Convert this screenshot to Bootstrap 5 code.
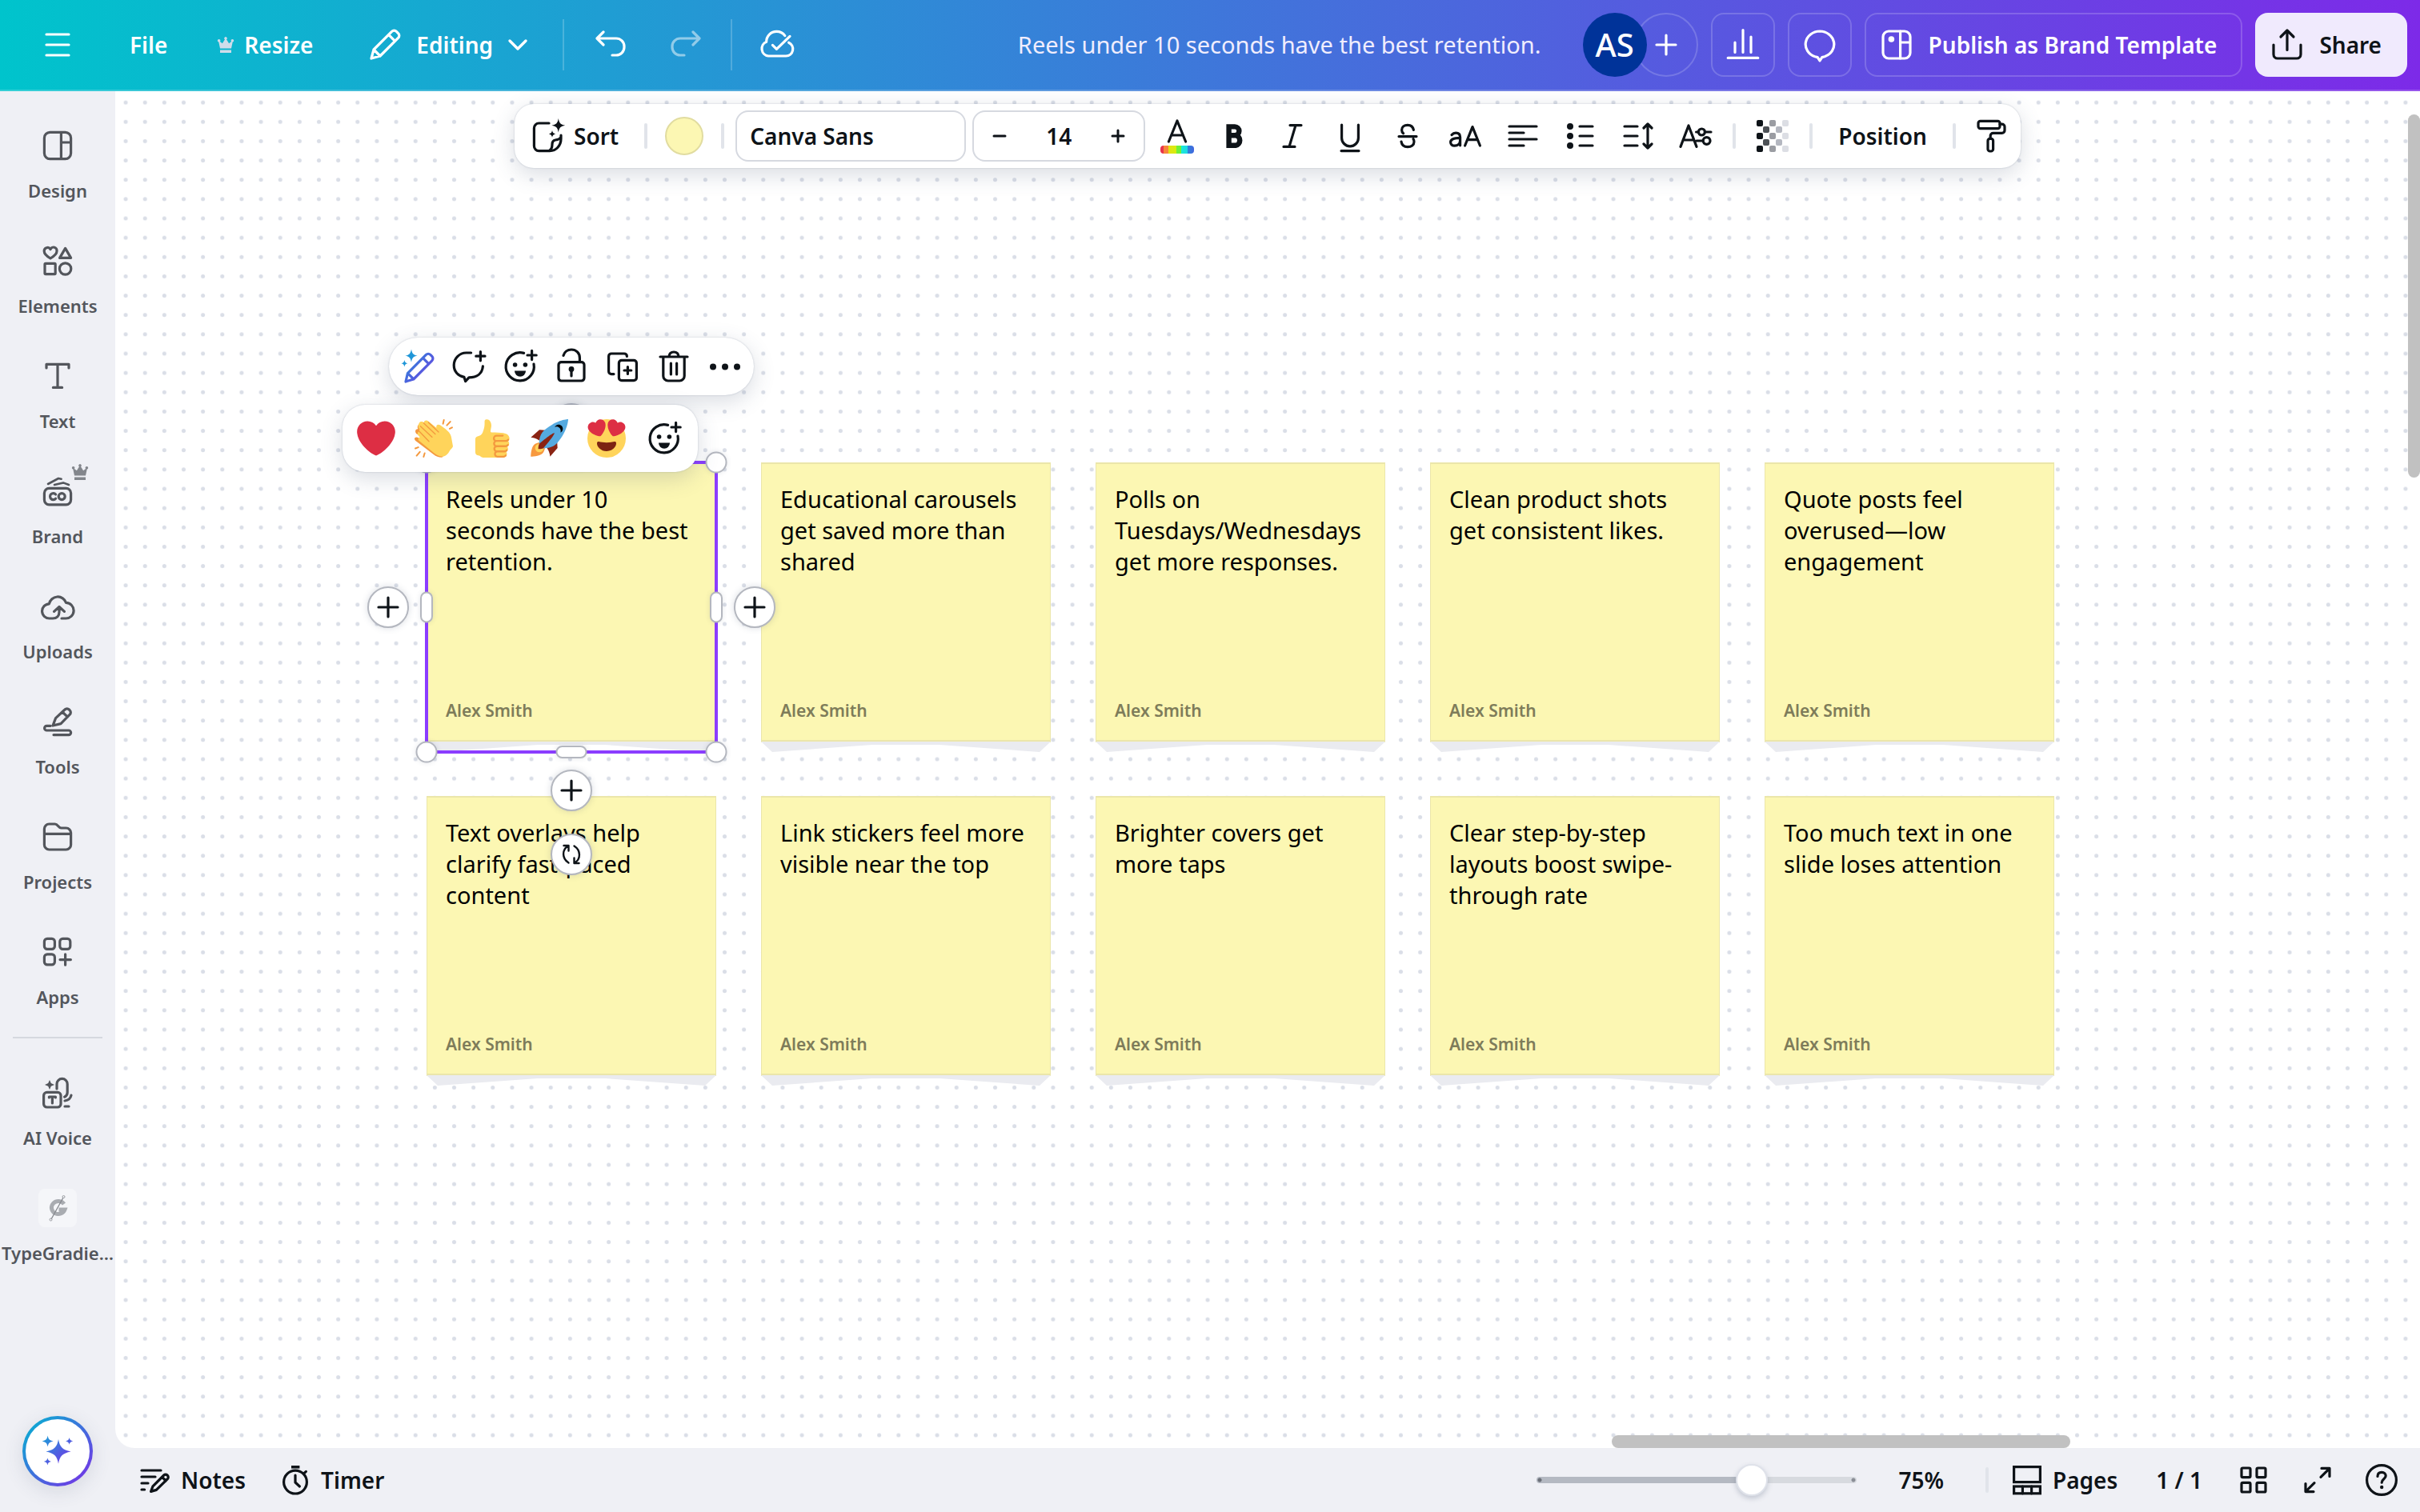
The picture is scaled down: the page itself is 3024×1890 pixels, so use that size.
<!DOCTYPE html>
<html lang="en">
<head>
<meta charset="utf-8">
<meta name="viewport" content="width=device-width, initial-scale=1">
<title>Reels under 10 seconds have the best retention.</title>
<link rel="stylesheet" href="https://cdn.jsdelivr.net/npm/bootstrap@5.3.0/dist/css/bootstrap.min.css">
<style>
  :root { --ink: #0e1318; --chrome: #eff0f5; --muted: #53565c; --rule: #d9dce3; }
  html, body { height: 100%; }
  body { font-family: "Noto Sans", sans-serif; font-size: 28px; line-height: 40px; color: var(--ink); background: var(--chrome); overflow: hidden; }
  button, input, select { font: inherit; color: inherit; }
  button { background: none; border: 0; padding: 0; }
  svg { display: block; flex: none; }
  .ico { width: 48px; height: 48px; fill: none; stroke: currentColor; stroke-width: 1.6; stroke-linecap: round; stroke-linejoin: round; }
  .ico-bold { stroke-width: 3.2; stroke-linejoin: miter; }
  .ico-pen { stroke: url(#penGrad); }
  .ico-square { stroke-linejoin: miter; }
  .solid { fill: currentColor; stroke: none; }
  .fill-min { min-width: 0; min-height: 0; }

  /* header */
  .topbar { height: 114px; padding: 0 16px 2px 48px; color: #fff; background: linear-gradient(90deg, #00c4cc, #7d2ae8); box-shadow: inset 0 -2px rgba(255,255,255,.2); font-weight: 600; }
  .topbar .vr-line { width: 2px; height: 64px; background: rgba(255,255,255,.2); }
  .topbar .ghost { height: 80px; min-width: 80px; border: 2px solid rgba(255,255,255,.18); border-radius: 16px; }
  .file-btn { margin-left: 66px; }
  .resize-btn { margin-left: 62px; gap: 12px; }
  .edit-btn { margin: 0 40px 0 66px; gap: 15px; }
  .undo-btn { margin-left: 34px; }
  .redo-btn { margin: 0 32px 0 46px; }
  .save-btn { margin-left: 32px; }
  .doc-title { width: 660px; margin-right: 52px; padding: 0; border: 0; background: none; color: #f0edfd; font-size: 29px; font-weight: 400; text-align: end; }
  .avatar { width: 80px; height: 80px; border-radius: 50%; background: #003399; font-size: 40px; font-weight: 500; z-index: 1; }
  .invite { width: 80px; height: 80px; border: 2px solid rgba(255,255,255,.18); border-radius: 50%; margin-left: -16px; margin-right: 16px; }
  .publish { padding: 0 30px 0 14px; gap: 16px; }
  .share { height: 80px; padding: 0 32px 0 16px; gap: 16px; border-radius: 16px; background: #f0eafd; color: var(--ink); }

  /* side rail */
  .rail { width: 144px; color: var(--muted); font-size: 22px; line-height: 32px; font-weight: 600; }
  .rail-item { width: 144px; height: 144px; padding-top: 44px; gap: 16px; color: inherit; text-decoration: none; white-space: nowrap; }
  .rail-rule { width: 112px; height: 2px; margin-top: 30px; background: #d5d8df; }
  .crown-badge { position: absolute; top: 34px; left: 89px; color: #83868c; }
  .app-tile { width: 48px; height: 48px; border-radius: 8px; background: #f5f6f9; }
  .magic { width: 88px; height: 88px; margin: auto 0 32px; border: 4px solid transparent; border-radius: 50%; background: linear-gradient(#fff,#fff) padding-box, linear-gradient(135deg,#00b8d0,#7d2ae8) border-box; box-shadow: 0 6px 24px rgba(64,79,109,.14); }

  /* canvas */
  .stage { border-bottom-left-radius: 24px; background-color: #fff; overflow: hidden;
    background-image: url("data:image/svg+xml,%3Csvg xmlns='http://www.w3.org/2000/svg' viewBox='0 0 7 7'%3E%3Cdefs%3E%3Cpattern id='d' width='1' height='1' patternUnits='userSpaceOnUse'%3E%3Ccircle cx='.5' cy='.5' r='.105' fill='%23dadee7'/%3E%3C/pattern%3E%3C/defs%3E%3Crect width='7' height='7' fill='url(%23d)'/%3E%3C/svg%3E");
    background-size: 169px 169px; background-position: 1px 2px; }
  .board { padding: 464px 0 0 389px; }
  .sticky-grid { display: grid; grid-template-columns: repeat(5, 362px); gap: 55px 56px; }
  .sticky { position: relative; height: 362px; }
  .sticky-shade { position: absolute; left: 0; bottom: 0; width: 362px; height: 13px; }
  .sticky-face { height: 350px; padding: 24px 23px 19px; background: #fcf7b3; border: 2px solid #ebe6aa; border-width: 2px 1px 3px; color: #000; font-size: 29px; line-height: 39px; }
  .sticky-author { font-size: 21px; line-height: 36px; font-weight: 600; color: #7e7c5a; }

  /* selection */
  .sel-frame { position: absolute; inset: -2px; border: 4px solid #8b3dff; }
  .grip, .add-btn { position: absolute; transform: translate(-50%,-50%); background: #fff; border: 2px solid #b4b7bf; box-shadow: 0 0 6px rgba(64,79,109,.14); }
  .grip { width: 27px; height: 27px; border-radius: 50%; }
  .grip.tall { width: 16px; height: 39px; border-radius: 8px; }
  .grip.wide { width: 39px; height: 16px; border-radius: 8px; }
  .add-btn { width: 52px; height: 52px; border-radius: 50%; display: grid; place-items: center; box-shadow: 0 0 8px rgba(64,79,109,.2); }
  .l { left: 0; } .c { left: 50%; } .r { left: 100%; }
  .t { top: 0; } .m { top: 50%; } .b { top: 100%; }
  .out-l { left: -48px; } .out-r { left: 410px; } .out-t { top: -48px; } .out-b { top: 410px; } .spin { top: 490px; }

  /* floating bars */
  .float-bar { position: absolute; background: #fff; box-shadow: 0 0 2px rgba(64,79,109,.3), 0 8px 28px rgba(64,79,109,.2); }
  .actions { top: -156px; left: -47px; height: 72px; padding: 0 4px; border-radius: 36px; }
  .actions button { width: 64px; height: 72px; }
  .reactions { top: -72px; left: -105px; height: 84px; padding: 0 6px; border-radius: 28px; }
  .reactions button { width: 72px; height: 84px; }
  .format { top: 16px; left: 50%; transform: translateX(-50%); height: 80px; width: 1882px; border-radius: 24px; font-weight: 600; padding-left: 18px; }
  .format > * { flex: none; }
  .format .tool { width: 72px; height: 72px; }
  .bar-rule { width: 4px; height: 32px; border-radius: 2px; background: #e1e4ea; flex: none; }
  .rule-gap { margin: 0 10px; }
  .sort-btn { gap: 8px; margin-right: 32px; }
  .swatch { width: 48px; height: 48px; border-radius: 50%; background: #fcf7b3; border: 2px solid #e1dca0; margin: 0 22px; }
  .field { height: 64px; border: 2px solid #d6d9e0; border-radius: 16px; }
  .font-field { width: 288px; margin: 0 8px 0 14px; padding: 0 16px; background: #fff; appearance: none; }
  .size-field { width: 216px; margin-right: 4px; }
  .size-field button { width: 64px; height: 60px; }
  .size-field input { width: 84px; border: 0; text-align: center; padding: 0; }
  .pos-btn { margin: 0 32px; }

  /* scrollbars */
  .thumb-v { position: absolute; right: 0; top: 29px; width: 15px; height: 454px; border-radius: 8px; background: #c1c1c1; }
  .thumb-h { position: absolute; right: 437px; bottom: 0; width: 573px; height: 16px; border-radius: 8px; background: #c1c1c1; }

  /* footer */
  .footbar { height: 80px; padding: 0 24px 0 26px; font-weight: 600; }
  .timer-btn { margin-left: 38px; }
  .zoom-range { appearance: none; width: 400px; height: 40px; background: none; margin-right: 52px; }
  .zoom-range::-webkit-slider-runnable-track { height: 8px; border-radius: 4px; background: radial-gradient(circle at 4px 4px, #6b6f78 2px, transparent 3px), radial-gradient(circle at 396px 4px, #8a8e96 2px, transparent 3px), linear-gradient(90deg, #b4b9c2 67%, #d7dadf 67%); }
  .zoom-range::-webkit-slider-thumb { appearance: none; width: 40px; height: 40px; margin-top: -16px; border-radius: 50%; background: #fff; border: 2px solid #dfe2ea; box-shadow: 0 3px 6px rgba(64,79,109,.25); }
  .zoom-value { margin-right: 52px; }
  .page-count { margin: 0 40px 0 48px; }
  .full-btn { margin: 0 32px; }
</style>
</head>
<body class="d-flex flex-column">

<svg width="0" height="0" class="position-absolute" aria-hidden="true">
  <defs>
    <linearGradient id="brandGrad" x1="0" y1="0" x2="1" y2="1"><stop offset="0" stop-color="#1aa0d8"/><stop offset="1" stop-color="#7d2ae8"/></linearGradient>
    <linearGradient id="penGrad" gradientUnits="userSpaceOnUse" x1="3" y1="4" x2="22" y2="20"><stop offset="0" stop-color="#1aa0d8"/><stop offset=".5" stop-color="#4a66dd"/><stop offset="1" stop-color="#7040e4"/></linearGradient>
    <linearGradient id="rainbow"><stop offset=".1" stop-color="#e8344c"/><stop offset=".1" stop-color="#f7853b"/><stop offset=".25" stop-color="#f7853b"/><stop offset=".25" stop-color="#e2e412"/><stop offset=".47" stop-color="#d8ea10"/><stop offset=".47" stop-color="#6ff03a"/><stop offset=".63" stop-color="#6ff03a"/><stop offset=".63" stop-color="#18ead8"/><stop offset=".8" stop-color="#1fd8e4"/><stop offset=".8" stop-color="#2c84da"/><stop offset="1" stop-color="#4466de"/></linearGradient>
  </defs>
  <symbol id="i-crown" viewBox="0 0 22 20"><path d="M4 14.5 2.300 6.500a1.700 1.700 0 1 1 1.600-.6l3 2.400L10 3.300a1.700 1.700 0 1 1 2 0l3.100 5 3-2.400a1.700 1.700 0 1 1 1.600.6L18 14.500zM4 16.500h14V20H4z"/></symbol>
  <symbol id="i-plus" viewBox="0 0 24 24"><path d="M12 6v12M6 12h12"/></symbol>
  <symbol id="i-smile" viewBox="0 0 24 24"><path d="M14.300 3.700A8.800 8.800 0 1 0 20.500 10.500M19.300 2.200v5.600M16.500 5h5.600"/><path class="solid" d="M8.500 14.800h7a3.500 3.600 0 0 1-7 0z"/><circle class="solid" cx="8.800" cy="11" r="1.400"/><circle class="solid" cx="15.200" cy="11" r="1.400"/></symbol>
  <symbol id="shade" viewBox="0 0 362 13"><path d="M0 0h362l-14 13L223 4H139L14 13z" fill="#eaebf0"/></symbol>
</svg>

<header class="topbar d-flex align-items-center flex-shrink-0">
  <button aria-label="Menu"><svg class="ico" viewBox="0 0 24 24"><path d="M5 5.500h14M5 12h14M5 18.500h14"/></svg></button>
  <button class="file-btn">File</button>
  <button class="resize-btn d-flex align-items-center"><svg width="22" height="20" fill="#cfdcea"><use href="#i-crown"/></svg>Resize</button>
  <button class="edit-btn d-flex align-items-center">
    <svg class="ico" viewBox="0 0 24 24"><path d="M3.500 20.500 5 15 16.300 3.700a2 2 0 0 1 2.900 0l1.100 1.100a2 2 0 0 1 0 2.900L9 19zM5 15l4 4M14.300 5.700l4 4"/></svg>Editing
    <svg width="32" height="32" viewBox="0 0 16 16" fill="none" stroke="currentColor" stroke-width="1.700" stroke-linecap="round" stroke-linejoin="round"><path d="m3 5.500 5 5 5-5"/></svg></button>
  <span class="vr-line"></span>
  <button class="undo-btn" aria-label="Undo"><svg class="ico" viewBox="0 0 24 24"><path d="M7.500 4 3.500 8l4 4M3.700 8H15.500a5 5 0 0 1 5 5v.5a5 5 0 0 1-5 5H13"/></svg></button>
  <button class="redo-btn opacity-50" aria-label="Redo"><svg class="ico" viewBox="0 0 24 24"><path d="m16.500 4 4 4-4 4M20.300 8H8.500a5 5 0 0 0-5 5v.5a5 5 0 0 0 5 5H11"/></svg></button>
  <span class="vr-line"></span>
  <button class="save-btn" aria-label="Saved"><svg class="ico" viewBox="0 0 24 24"><path d="M19.300 10.600A4.400 4.400 0 0 1 17.600 19H6.500A4.600 4.600 0 0 1 5.300 10.200C5.300 6.500 8.200 3.700 11.700 3.700c2.200 0 4 .9 5.200 2.600M9.200 12.200l2.500 2.500 8.300-8"/></svg></button>

  <input class="doc-title ms-auto" aria-label="Design title" value="Reels under 10 seconds have the best retention.">
  <div class="avatar d-flex align-items-center justify-content-center">AS</div>
  <button class="invite d-flex align-items-center justify-content-center" aria-label="Invite"><svg class="ico"><use href="#i-plus"/></svg></button>
  <button class="ghost me-3 d-flex align-items-center justify-content-center" aria-label="Insights"><svg class="ico" viewBox="0 0 24 24"><path d="M2.600 20.200h18.800M7 16.700V10.500M12 16.700V2.800M17 16.700V7"/></svg></button>
  <button class="ghost me-3 d-flex align-items-center justify-content-center" aria-label="Comments"><svg class="ico" viewBox="0 0 24 24"><path d="M12 3.500a9 8.200 0 0 1 3 15.900l-1.600.4L12 22l-1.400-2.200L9 19.400A9 8.200 0 0 1 12 3.500z"/></svg></button>
  <button class="ghost publish me-3 d-flex align-items-center"><svg class="ico" viewBox="0 0 24 24"><rect x="3.500" y="3.500" width="17" height="17" rx="3.500"/><path d="M14.300 3.500v17M14.300 10.500h6"/><circle class="solid" cx="8.700" cy="8.500" r="1.900"/></svg>Publish as Brand Template</button>
  <button class="share d-flex align-items-center"><svg class="ico" viewBox="0 0 24 24"><path d="M3.500 12v6a2.500 2.500 0 0 0 2.500 2.500h12a2.500 2.500 0 0 0 2.500-2.500v-6M12 15.200V3.500M8 7l4-4 4 4"/></svg>Share</button>
</header>

<div class="d-flex flex-grow-1 fill-min">
  <nav class="rail d-flex flex-column align-items-center flex-shrink-0">
    <a href="#" class="rail-item d-flex flex-column align-items-center"><svg class="ico" viewBox="0 0 24 24"><rect x="3.700" y="3.700" width="16.600" height="16.600" rx="3.500"/><path d="M14.200 4v16M14.200 10h6"/></svg>Design</a>
    <a href="#" class="rail-item d-flex flex-column align-items-center"><svg class="ico" viewBox="0 0 24 24"><path d="M7.500 10.500C5 9 3.600 7.700 3.600 6a2.100 2.100 0 0 1 3.900-1.200A2.100 2.100 0 0 1 11.500 6c0 1.700-1.500 3-4 4.500zM16.800 4.200l3.500 6h-7z"/><rect x="4" y="13.700" width="6.600" height="6.600" rx=".5"/><circle cx="16.800" cy="17" r="3.600"/></svg>Elements</a>
    <a href="#" class="rail-item d-flex flex-column align-items-center"><svg class="ico" viewBox="0 0 24 24"><path d="M5 7V4.700h14V7M12 4.700v14.500M9.200 19.200h5.600"/></svg>Text</a>
    <a href="#" class="rail-item position-relative d-flex flex-column align-items-center"><svg class="crown-badge" width="22" height="20" fill="currentColor"><use href="#i-crown"/></svg><svg class="ico" viewBox="0 0 24 24"><rect x="3.700" y="10.200" width="16.600" height="10.200" rx="3"/><path d="M6 7.500 12.500 4l1.800.4M10 8l5.500-1.300L19 8" stroke-width="1.300"/><path d="M10.800 14a2 2 0 1 0 0 2.600"/><circle cx="14.600" cy="15.300" r="2"/></svg>Brand</a>
    <a href="#" class="rail-item d-flex flex-column align-items-center"><svg class="ico" viewBox="0 0 24 24"><path d="M9 19.500H7A4.500 4.500 0 0 1 6.700 10.400 5.500 5.500 0 0 1 17.300 9.700 4.900 4.900 0 0 1 17 19.500h-2.500M9 19.500c2.500 0 4-1.500 4-4v-3M9.800 15.200l3.200-3 3.200 3"/></svg>Uploads</a>
    <a href="#" class="rail-item d-flex flex-column align-items-center"><svg class="ico" viewBox="0 0 24 24"><path d="m9 14.500 1.800-4.700 5.700-5.300a1.900 1.900 0 0 1 2.700 0l.4.400a1.900 1.900 0 0 1 0 2.700L14 13.300zM15 6l3.200 3.100M7.500 14.700H5.200a1.400 1.400 0 0 0 0 2.800h13.700a1.400 1.400 0 0 1 0 2.800H9.500"/></svg>Tools</a>
    <a href="#" class="rail-item d-flex flex-column align-items-center"><svg class="ico" viewBox="0 0 24 24"><path d="M3.700 17V7a3 3 0 0 1 3-3h3.600c2 0 2 2.500 4 2.500h3a3 3 0 0 1 3 3V17a3 3 0 0 1-3 3H6.700a3 3 0 0 1-3-3zM3.700 10.200h16.600"/></svg>Projects</a>
    <a href="#" class="rail-item d-flex flex-column align-items-center"><svg class="ico" viewBox="0 0 24 24"><rect x="3.700" y="3.700" width="6.500" height="6.500" rx="1.800"/><rect x="13.400" y="3.700" width="6.500" height="6.500" rx="1.800"/><rect x="3.700" y="13.400" width="6.500" height="6.500" rx="1.800"/><path d="M16.800 13.400v6.700M13.500 16.800h6.700"/></svg>Apps</a>
    <span class="rail-rule"></span>
    <a href="#" class="rail-item d-flex flex-column align-items-center"><svg class="ico" viewBox="0 0 24 24"><rect x="3.300" y="11.700" width="10.700" height="9.300" rx="2"/><path d="M6.700 15v-.5h4v.5M8.700 14.500v4M11.500 9.500V6.500a3.300 3.300 0 0 1 6.600 0v5.300c0 1.500-.6 2.300-1.800 2.800M20.500 13.500c-.4 2-1.800 3.200-4 3.500M16.500 20.500h2.500"/><path class="solid" d="m7 4 .9 2L10 7l-2.100.9L7 10l-.9-2.100L4 7l2.100-1z"/></svg>AI Voice</a>
    <a href="#" class="rail-item d-flex flex-column align-items-center"><span class="app-tile d-flex align-items-center justify-content-center"><svg width="26" height="34" viewBox="0 0 26 34" fill="none"><path d="M21 12a8.500 8 0 1 0 1 7h-7.500" stroke="#a9acb1" stroke-width="5"/><path d="M5 31 20 4" stroke="#85888e" stroke-width="1.300"/><circle cx="4.500" cy="31.500" r="1.500" stroke="#9a9da2"/><circle cx="20.500" cy="3" r="1.500" stroke="#9a9da2"/></svg></span>TypeGradie…</a>
    <button class="magic d-flex align-items-center justify-content-center" aria-label="Assistant"><svg width="48" height="48" viewBox="0 0 24 24" fill="url(#brandGrad)"><path d="M12.500 4.500c.8 4.800 2.500 6.700 7.800 7.700-5.300 1-7 2.900-7.800 7.700-.8-4.800-2.500-6.700-7.800-7.700 5.300-1 7-2.900 7.800-7.700zM5.800 2.300c.4 2.200 1.100 3 3.500 3.400-2.400.5-3.100 1.300-3.500 3.500-.4-2.200-1.100-3-3.500-3.500 2.400-.4 3.100-1.200 3.500-3.400zM19.300 3.500c.3 1.400.8 1.900 2.300 2.200-1.500.3-2 .8-2.300 2.200-.3-1.400-.8-1.900-2.300-2.200 1.500-.3 2-.8 2.300-2.200zM5.700 16.300c.3 1.400.8 1.900 2.300 2.200-1.500.3-2 .8-2.300 2.200-.3-1.400-.8-1.900-2.300-2.200 1.500-.3 2-.8 2.300-2.200z"/></svg></button>
  </nav>

  <div class="d-flex flex-column flex-grow-1 fill-min">
    <main class="stage position-relative flex-grow-1">
      <div class="board">
        <div class="sticky-grid">
          <article class="sticky z-2"><svg class="sticky-shade"><use href="#shade"/></svg><div class="sticky-face d-flex flex-column justify-content-between"><div>Reels under 10 seconds have the best retention.</div><div class="sticky-author">Alex Smith</div></div>
            <span class="sel-frame"></span>
            <span class="grip l t"></span><span class="grip wide c t"></span><span class="grip r t"></span>
            <span class="grip tall l m"></span><span class="grip tall r m"></span>
            <span class="grip l b"></span><span class="grip wide c b"></span><span class="grip r b"></span>
            <button class="add-btn c out-t" aria-label="Add above"><svg class="ico"><use href="#i-plus"/></svg></button>
            <button class="add-btn out-l m" aria-label="Add left"><svg class="ico"><use href="#i-plus"/></svg></button>
            <button class="add-btn out-r m" aria-label="Add right"><svg class="ico"><use href="#i-plus"/></svg></button>
            <button class="add-btn c out-b" aria-label="Add below"><svg class="ico"><use href="#i-plus"/></svg></button>
            <button class="add-btn c spin" aria-label="Rotate"><svg width="32" height="32" viewBox="0 0 32 32" fill="none" stroke="currentColor" stroke-width="2.400" stroke-linecap="round" stroke-linejoin="round"><path d="M12.500 26.500C4 21 4 10 12 5.500M6.500 5h6v6.500M19.500 5.500C28 11 28 22 20 26.500M25.500 27h-6v-6.500"/></svg></button>

            <div class="float-bar actions d-flex">
              <button class="d-flex align-items-center justify-content-center" aria-label="Edit"><svg class="ico ico-pen" viewBox="0 0 24 24"><path d="m4.500 21.500 1.200-5.200L17.200 4.700a1.900 1.900 0 0 1 2.700 0l1 1a1.900 1.900 0 0 1 0 2.700L9.400 20zM5.900 16.400l3.400 3.400M15.200 6.700l3.700 3.700"/><path d="M8 1.200c.5 2.700 1.200 3.600 3.800 4.100C9.200 5.800 8.500 6.700 8 9.400 7.500 6.700 6.800 5.800 4.200 5.300 6.800 4.800 7.500 3.900 8 1.200zM3.700 8c.3 1.400.7 1.900 2 2.100-1.300.3-1.700.8-2 2.200-.3-1.400-.7-1.900-2-2.200 1.300-.2 1.700-.7 2-2.100z" fill="#1f96d8" stroke="none"/></svg></button>
              <button class="d-flex align-items-center justify-content-center" aria-label="Comment"><svg class="ico" viewBox="0 0 24 24"><path d="M13.300 3.500h-3A7.800 7.800 0 0 0 2.600 11.300c0 4 2.700 6.800 6.400 7.400l.8 2.600 2.200-2.400c5 0 8.300-2.500 8.700-7M19.200 2.800v5.600M16.400 5.600H22"/></svg></button>
              <button class="d-flex align-items-center justify-content-center" aria-label="React"><svg class="ico"><use href="#i-smile"/></svg></button>
              <button class="d-flex align-items-center justify-content-center" aria-label="Lock"><svg class="ico" viewBox="0 0 24 24"><rect x="4" y="9.300" width="16" height="11.700" rx="1.700"/><path d="M7 5.200C7.700 3 9.500 1.500 12 1.500c3 0 5.200 2.200 5.200 5.200V9M12 14v4"/><circle class="solid" cx="12" cy="13.700" r="1.700"/></svg></button>
              <button class="d-flex align-items-center justify-content-center" aria-label="Duplicate"><svg class="ico" viewBox="0 0 24 24"><path d="M6.500 16.800H5a1.700 1.700 0 0 1-1.700-1.700V5.700A1.700 1.700 0 0 1 5 4h8a1.700 1.700 0 0 1 1.700 1.700"/><rect x="9.700" y="8.200" width="11" height="12.600" rx="1.700"/><path d="M15.200 12.300v4.400M13 14.500h4.400"/></svg></button>
              <button class="d-flex align-items-center justify-content-center" aria-label="Delete"><svg class="ico" viewBox="0 0 24 24"><path d="M3.500 6h17M9 5.700C9.200 3.900 10 3 12 3s2.800.9 3 2.700M5.400 6.300V18a3 3 0 0 0 3 3h7.200a3 3 0 0 0 3-3V6.300M10.200 10v7M13.800 10v7"/></svg></button>
              <button class="d-flex align-items-center justify-content-center" aria-label="More"><svg class="ico" viewBox="0 0 24 24"><g class="solid"><circle cx="4.500" cy="12.200" r="2"/><circle cx="12" cy="12.200" r="2"/><circle cx="19.500" cy="12.200" r="2"/></g></svg></button>
            </div>

            <div class="float-bar reactions d-flex">
              <button class="d-flex align-items-center justify-content-center" aria-label="Heart"><svg width="48" height="48" viewBox="0 0 36 36"><path fill="#dd2e44" d="M35.885 11.833c0-5.450-4.418-9.868-9.867-9.868-3.308 0-6.227 1.633-8.018 4.129-1.791-2.496-4.710-4.129-8.017-4.129-5.450 0-9.868 4.417-9.868 9.868 0 .772.098 1.520.266 2.241C1.751 22.587 11.216 31.568 18 34.034c6.783-2.466 16.249-11.447 17.617-19.959.170-.721.268-1.469.268-2.242z"/></svg></button>
              <button class="d-flex align-items-center justify-content-center" aria-label="Clap"><svg width="48" height="48" viewBox="0 0 36 36">
                <path fill="#f4993f" d="M3.500 5.500C5 4.500 6.500 5.500 7 7l-2 3C3 9.800 2 7.500 3.500 5.500zM1.200 10c1.300-1.300 3-.8 4 .5l-1 4C2 14.500-.2 12 1.200 10zM.3 17.500c1.300-1.300 3-.5 4.500.8L18 28.500 27 35l-1.500.8c-3 0-5.500-1-7.500-2.600L2 21C.3 19.800-.5 18.500.3 17.500z"/>
                <path fill="#ffd45b" d="M4.500 3.300c1-1.500 3-1.300 4.300 0C8.600 1.500 11 .3 12.900 1.800L20.500 8c-.5-2.300 1.200-3.700 3.400-2.500l4.100 3c3.500 2.600 6 5.300 6.500 8.500l1.500 8.500c-.3 1.500-2 2.300-3.300 4.500-1 2-3.200 5-6.700 5-3 0-5.500-1.500-8-3.500L4.500 20.500c-1.600-1.300-1.300-3 .5-3.700l-1.500-1.700c-1.200-1.500-.6-3.300 1-3.700l.3-2.200C3 7.500 3.300 5 4.500 3.300z"/>
                <path d="M8.500 3.500 19.500 14M5.500 6.500l11 10.300M4.500 11.500l9 9.300M13 3l9.500 9" fill="none" stroke="#f4993f" stroke-width="1" stroke-linecap="round"/>
                <path d="M27.500.800 26.700 4.300M33.500 2.300 30.300 5.700M35.200 7.800 33 8.900M.800 27.400l2.700-1.100M2 34.200l3-3.600M8.500 35.200l1-3.300" fill="none" stroke="#f4993f" stroke-width="1.500" stroke-linecap="round"/></svg></button>
              <button class="d-flex align-items-center justify-content-center" aria-label="Thumbs up"><svg width="48" height="48" viewBox="0 0 36 36"><path fill="#ffd45b" d="M34.956 17.916c0-.503-.120-.975-.321-1.404-1.341-4.326-7.619-4.010-16.549-4.221-1.493-.035-.639-1.798-.115-5.668.341-2.517-1.282-6.382-4.010-6.382-4.498 0-.171 3.548-4.148 12.322-2.125 4.688-6.875 2.062-6.875 6.771v10.719c0 1.833.180 3.595 2.758 3.885C8.195 34.219 7.633 36 11.238 36h18.044c1.838 0 3.333-1.496 3.333-3.334 0-.762-.267-1.456-.698-2.018 1.020-.571 1.720-1.649 1.720-2.899 0-.760-.266-1.454-.696-2.015 1.023-.570 1.725-1.649 1.725-2.901 0-.909-.368-1.733-.961-2.336.757-.611 1.251-1.535 1.251-2.581z"/><path fill="#f4993f" d="M23.020 21.249h8.604c1.170 0 2.268-.626 2.866-1.633.246-.415.109-.952-.307-1.199-.415-.247-.952-.108-1.199.307-.283.479-.806.775-1.361.775h-8.810c-.873 0-1.583-.710-1.583-1.583s.710-1.583 1.583-1.583H28.700c.483 0 .875-.392.875-.875s-.392-.875-.875-.875h-5.888c-1.838 0-3.333 1.495-3.333 3.333 0 1.025.475 1.932 1.205 2.544-.615.605-.998 1.445-.998 2.373 0 1.028.478 1.938 1.212 2.549-.611.604-.990 1.441-.990 2.367 0 1.120.559 2.108 1.409 2.713-.524.589-.852 1.356-.852 2.204 0 1.838 1.495 3.333 3.333 3.333h5.484c1.170 0 2.269-.625 2.867-1.632.247-.415.110-.952-.305-1.199-.416-.245-.953-.110-1.199.305-.285.479-.808.776-1.363.776h-5.484c-.873 0-1.583-.710-1.583-1.583s.710-1.584 1.583-1.584h6.506c1.170 0 2.270-.626 2.867-1.633.247-.416.110-.953-.305-1.199-.419-.251-.954-.110-1.199.305-.289.487-.799.777-1.363.777h-7.063c-.873 0-1.583-.711-1.583-1.584s.710-1.583 1.583-1.583h8.091c1.170 0 2.269-.625 2.867-1.632.247-.415.110-.952-.305-1.199-.417-.246-.953-.110-1.199.305-.289.486-.799.776-1.363.776H23.020c-.873 0-1.583-.710-1.583-1.583s.710-1.584 1.583-1.584z"/></svg></button>
              <button class="d-flex align-items-center justify-content-center" aria-label="Rocket"><svg width="48" height="48" viewBox="0 0 36 36"><path fill="#8a2414" d="M1 17l8-7 16 1 1 16-7 8s.001-5.999-6-12-12-6-12-6z"/><path fill="#f7993f" d="M.973 35s-.036-7.979 2.985-11S15 21.187 15 21.187 14.999 29 11.999 32c-3 3-11.026 3-11.026 3z"/><circle fill="#ffd45b" cx="9" cy="27" r="4"/><path fill="#55aae0" d="M35.999 0s-10 0-22 10c-6 5-6 14-4 16s11 2 16-4c10-12 10-22 10-22z"/><path d="M26.999 5c-1.623 0-3.013.971-3.641 2.360.502-.227 1.055-.360 1.641-.360 2.209 0 4 1.791 4 4 0 .586-.133 1.139-.359 1.640 1.389-.627 2.359-2.017 2.359-3.640 0-2.209-1.791-4-4-4z"/><path fill="#8a2414" d="M8 28s0-4 1-5 13.001-10.999 14-10-9.001 13-10.001 14S8 28 8 28z"/></svg></button>
              <button class="d-flex align-items-center justify-content-center" aria-label="Heart eyes"><svg width="48" height="48" viewBox="0 0 36 36"><circle cx="18" cy="18" r="18" fill="#ffd45b"/><path fill="#dd2e44" d="M16.650 3.281C15.791.850 13.126-.426 10.694.431c-1.476.521-2.521 1.711-2.928 3.104-1.191-.829-2.751-1.100-4.225-.580C1.111 3.813-.167 6.480.692 8.911c.122.344.284.663.472.958 1.951 3.582 7.588 6.100 11.001 6.131 2.637-2.167 5.446-7.665 4.718-11.677-.038-.348-.113-.698-.233-1.042zM19.350 3.281C20.209.850 22.875-.426 25.306.431c1.476.521 2.521 1.711 2.929 3.104 1.191-.829 2.751-1.100 4.225-.580 2.430.858 3.707 3.525 2.850 5.956-.123.344-.284.663-.472.958-1.951 3.582-7.588 6.100-11.002 6.131-2.637-2.167-5.445-7.665-4.717-11.677.037-.348.112-.698.231-1.042z"/><path fill="#7c2412" d="M18 21.849c-2.966 0-4.935-.346-7.369-.819-.557-.106-1.638 0-1.638 1.638 0 3.275 3.763 7.369 9.007 7.369s9.007-4.094 9.007-7.369c0-1.638-1.082-1.745-1.638-1.638-2.434.473-4.402.819-7.369.819"/></svg></button>
              <button class="d-flex align-items-center justify-content-center" aria-label="More reactions"><svg class="ico"><use href="#i-smile"/></svg></button>
            </div>
          </article>
          <article class="sticky"><svg class="sticky-shade"><use href="#shade"/></svg><div class="sticky-face d-flex flex-column justify-content-between"><div>Educational carousels get saved more than shared</div><div class="sticky-author">Alex Smith</div></div></article>
          <article class="sticky"><svg class="sticky-shade"><use href="#shade"/></svg><div class="sticky-face d-flex flex-column justify-content-between"><div>Polls on Tuesdays/Wednesdays get more responses.</div><div class="sticky-author">Alex Smith</div></div></article>
          <article class="sticky"><svg class="sticky-shade"><use href="#shade"/></svg><div class="sticky-face d-flex flex-column justify-content-between"><div>Clean product shots get consistent likes.</div><div class="sticky-author">Alex Smith</div></div></article>
          <article class="sticky"><svg class="sticky-shade"><use href="#shade"/></svg><div class="sticky-face d-flex flex-column justify-content-between"><div>Quote posts feel overused—low engagement</div><div class="sticky-author">Alex Smith</div></div></article>
          <article class="sticky"><svg class="sticky-shade"><use href="#shade"/></svg><div class="sticky-face d-flex flex-column justify-content-between"><div>Text overlays help clarify fast-paced content</div><div class="sticky-author">Alex Smith</div></div></article>
          <article class="sticky"><svg class="sticky-shade"><use href="#shade"/></svg><div class="sticky-face d-flex flex-column justify-content-between"><div>Link stickers feel more visible near the top</div><div class="sticky-author">Alex Smith</div></div></article>
          <article class="sticky"><svg class="sticky-shade"><use href="#shade"/></svg><div class="sticky-face d-flex flex-column justify-content-between"><div>Brighter covers get more taps</div><div class="sticky-author">Alex Smith</div></div></article>
          <article class="sticky"><svg class="sticky-shade"><use href="#shade"/></svg><div class="sticky-face d-flex flex-column justify-content-between"><div>Clear step-by-step layouts boost swipe-through rate</div><div class="sticky-author">Alex Smith</div></div></article>
          <article class="sticky"><svg class="sticky-shade"><use href="#shade"/></svg><div class="sticky-face d-flex flex-column justify-content-between"><div>Too much text in one slide loses attention</div><div class="sticky-author">Alex Smith</div></div></article>
        </div>
      </div>

      <div class="float-bar format d-flex align-items-center" role="toolbar">
        <button class="sort-btn d-flex align-items-center"><svg class="ico" viewBox="0 0 24 24"><path d="M12.500 4H6.200a3 3 0 0 0-3 3v11.300a3 3 0 0 0 3 3H13c4 0 7-3.300 7-7.500v-2.300M12.500 21.300c1.600-.8 2-2.300 2-4 0-1.700.6-2.600 2-2.800 1.500-.2 3-.6 3.500-2"/><path class="solid" d="M18.400 1c.5 2.900 1.300 3.900 4.200 4.400-2.900.5-3.700 1.500-4.200 4.400-.5-2.900-1.300-3.900-4.200-4.400 2.900-.5 3.700-1.500 4.200-4.400zM14.500 8.500c.3 1.400.7 1.900 2.100 2.200-1.400.3-1.800.8-2.100 2.200-.3-1.400-.7-1.900-2.100-2.200 1.400-.3 1.800-.8 2.100-2.200z"/></svg>Sort</button>
        <span class="bar-rule"></span>
        <button class="swatch" aria-label="Color"></button>
        <span class="bar-rule"></span>
        <select class="field font-field" aria-label="Font"><option>Canva Sans</option></select>
        <div class="field size-field d-flex align-items-center">
          <button class="d-flex align-items-center justify-content-center" aria-label="Decrease"><svg width="32" height="32" viewBox="0 0 16 16" stroke="currentColor" stroke-width="1.500" stroke-linecap="round"><path d="M4.500 8h7"/></svg></button>
          <input aria-label="Font size" value="14">
          <button class="d-flex align-items-center justify-content-center" aria-label="Increase"><svg width="32" height="32" viewBox="0 0 16 16" stroke="currentColor" stroke-width="1.500" stroke-linecap="round"><path d="M4.500 8h7M8 4.500v7"/></svg></button>
        </div>
        <button class="tool d-flex align-items-center justify-content-center" aria-label="Text color"><svg class="ico" viewBox="0 0 24 24"><path d="M6.700 15.500 12 2.500l5.300 13M8.400 11.500h7.200"/><rect x="1.500" y="18" width="21" height="5" rx="2" fill="url(#rainbow)" stroke="none"/></svg></button>
        <button class="tool d-flex align-items-center justify-content-center" aria-label="Bold"><svg class="ico ico-bold" viewBox="0 0 24 24"><path d="M8.300 6.200v11.700h4.200a3.200 3.200 0 0 0 0-6.300H8.300h3.700a2.700 2.700 0 0 0 0-5.400z"/></svg></button>
        <button class="tool d-flex align-items-center justify-content-center" aria-label="Italic"><svg class="ico" viewBox="0 0 24 24"><path d="M10.500 5.300h7M6.500 18.700h7M14 5.300l-4 13.400"/></svg></button>
        <button class="tool d-flex align-items-center justify-content-center" aria-label="Underline"><svg class="ico" viewBox="0 0 24 24"><path d="M6.800 5v8.200a5.200 5.200 0 0 0 10.400 0V5M6.500 21.300h11"/></svg></button>
        <button class="tool d-flex align-items-center justify-content-center" aria-label="Strikethrough"><svg class="ico" viewBox="0 0 24 24"><path d="M15.700 8.200C15.300 6.200 14 5.200 12 5.200c-2.200 0-3.700 1.200-3.700 3 0 1 .4 1.700 1 2.200M8 15.500c.3 2 1.700 3.300 4 3.300s4-1.200 4-3.200c0-.7-.1-1.200-.5-1.700M6.500 12.300h11"/></svg></button>
        <button class="tool d-flex align-items-center justify-content-center" aria-label="Uppercase"><svg class="ico" viewBox="0 0 24 24"><path d="M3.500 11.300c.8-.9 1.600-1.200 2.600-1.200 1.800 0 2.700 1 2.700 2.700v5.100M8.800 13.200c-4 0-6 .8-6 2.700 0 1.300 1 2.200 2.500 2.200 2 0 3.500-1.300 3.500-3.500M11.800 18l4.700-11.700L21.200 18M13.300 14.300h6.400"/></svg></button>
        <button class="tool d-flex align-items-center justify-content-center" aria-label="Alignment"><svg class="ico" viewBox="0 0 24 24"><path d="M3.500 6h17M3.500 10h9M3.500 14h17M3.500 18h9"/></svg></button>
        <button class="tool d-flex align-items-center justify-content-center" aria-label="List"><svg class="ico" viewBox="0 0 24 24"><path d="M11.500 6h8M11.500 12h8M11.500 18h8"/><g class="solid"><circle cx="5.500" cy="6" r="2"/><circle cx="5.500" cy="12" r="2"/><circle cx="5.500" cy="18" r="2"/></g></svg></button>
        <button class="tool d-flex align-items-center justify-content-center" aria-label="Spacing"><svg class="ico" viewBox="0 0 24 24"><path d="M3.500 6h8M3.500 12h8M3.500 18h8M18 4.500v15M15.500 7 18 4.500 20.500 7M15.500 17l2.500 2.500 2.500-2.500"/></svg></button>
        <button class="tool d-flex align-items-center justify-content-center" aria-label="Advanced text"><svg class="ico" viewBox="0 0 24 24"><path d="M2.500 18.700 7.500 5.500l5 13.200M4.200 14.500h6.600M12.300 9.500h1M18 9.500h3.500M12.500 15h4"/><circle cx="15.700" cy="9.500" r="2"/><circle cx="18.800" cy="15" r="2.200"/></svg></button>
        <span class="bar-rule rule-gap"></span>
        <button class="tool d-flex align-items-center justify-content-center" aria-label="Transparency"><svg width="40" height="40" viewBox="0 0 20 20"><g fill="#0e1318"><rect width="4" height="4" rx="1"/><rect y="8" width="4" height="4" rx="1"/><rect y="16" width="4" height="4" rx="1"/></g><g fill="#4d5156"><rect x="4" y="4" width="4" height="4" rx="1"/><rect x="4" y="12" width="4" height="4" rx="1"/></g><g fill="#9a9ca2"><rect x="8" width="4" height="4" rx="1"/><rect x="8" y="8" width="4" height="4" rx="1"/><rect x="8" y="16" width="4" height="4" rx="1"/></g><g fill="#b4b7c0"><rect x="12" y="4" width="4" height="4" rx="1"/><rect x="12" y="12" width="4" height="4" rx="1"/></g><g fill="#dcdee4"><rect x="16" width="4" height="4" rx="1"/><rect x="16" y="8" width="4" height="4" rx="1"/><rect x="16" y="16" width="4" height="4" rx="1"/></g></svg></button>
        <span class="bar-rule rule-gap me-0"></span>
        <button class="pos-btn">Position</button>
        <span class="bar-rule"></span>
        <button class="tool ms-2 d-flex align-items-center justify-content-center" aria-label="Copy style"><svg class="ico" viewBox="0 0 24 24"><rect x="4" y="2.700" width="13.500" height="4.600" rx="1.300"/><path d="M17.500 4.600h1.300A1.700 1.700 0 0 1 20.500 6.300v2.200a1.700 1.700 0 0 1-1.700 1.700h-5.500a1.700 1.700 0 0 0-1.700 1.700v1.700"/><rect x="10" y="13.700" width="3.300" height="7.800" rx="1.300"/></svg></button>
      </div>

      <span class="thumb-v"></span>
      <span class="thumb-h"></span>
    </main>

    <footer class="footbar d-flex align-items-center flex-shrink-0">
      <button class="d-flex align-items-center gap-2"><svg class="ico" viewBox="0 0 24 24"><path d="M3.500 6h12M3.500 10H12M3.500 14h4M3.500 18h1.800M9.300 19.200l1.200-3.300 6.900-6.900a1.500 1.500 0 0 1 2.100 0l.2.200a1.500 1.500 0 0 1 0 2.100l-7 6.900zM16.300 10.200l2.300 2.300"/></svg>Notes</button>
      <button class="timer-btn d-flex align-items-center gap-2"><svg class="ico" viewBox="0 0 24 24"><circle cx="12" cy="13.300" r="7.200"/><path d="M12 9v4.500l2.700 2.500M17.300 8l1.400-1.300"/><rect class="solid" x="9.500" y="3" width="5.200" height="1.800"/></svg>Timer</button>
      <input type="range" class="zoom-range ms-auto" min="0" max="100" value="69" aria-label="Zoom">
      <span class="zoom-value">75%</span>
      <span class="bar-rule"></span>
      <button class="ms-4 d-flex align-items-center gap-2"><svg class="ico ico-square" viewBox="0 0 24 24"><rect x="3.800" y="3.800" width="16.400" height="9.500"/><rect x="3.800" y="16" width="16.400" height="4.400"/><path d="M9.200 16v4.400M14.800 16v4.400"/></svg>Pages</button>
      <span class="page-count">1 / 1</span>
      <button aria-label="Grid view"><svg class="ico" viewBox="0 0 24 24"><rect x="4.500" y="4.500" width="5.500" height="5.800" rx=".8"/><rect x="14" y="4.500" width="5.500" height="5.800" rx=".8"/><rect x="4.500" y="13.700" width="5.500" height="5.800" rx=".8"/><rect x="14" y="13.700" width="5.500" height="5.800" rx=".8"/></svg></button>
      <button class="full-btn" aria-label="Full screen"><svg class="ico" viewBox="0 0 24 24"><path d="M14.500 4.700h5v5M19.300 4.900 14 10.200M9.500 19.300h-5v-5M4.700 19.100 10 13.800"/></svg></button>
      <button aria-label="Help"><svg class="ico" viewBox="0 0 24 24"><circle cx="12" cy="12" r="9.200"/><path d="M9.500 9.700c0-1.600 1-2.500 2.600-2.500 1.500 0 2.500.9 2.500 2.200 0 2-2.500 2-2.500 4.200"/><circle class="solid" cx="12.100" cy="16.500" r="1.100"/></svg></button>
    </footer>
  </div>
</div>

<script src="https://cdn.jsdelivr.net/npm/bootstrap@5.3.0/dist/js/bootstrap.bundle.min.js"></script>
</body>
</html>
